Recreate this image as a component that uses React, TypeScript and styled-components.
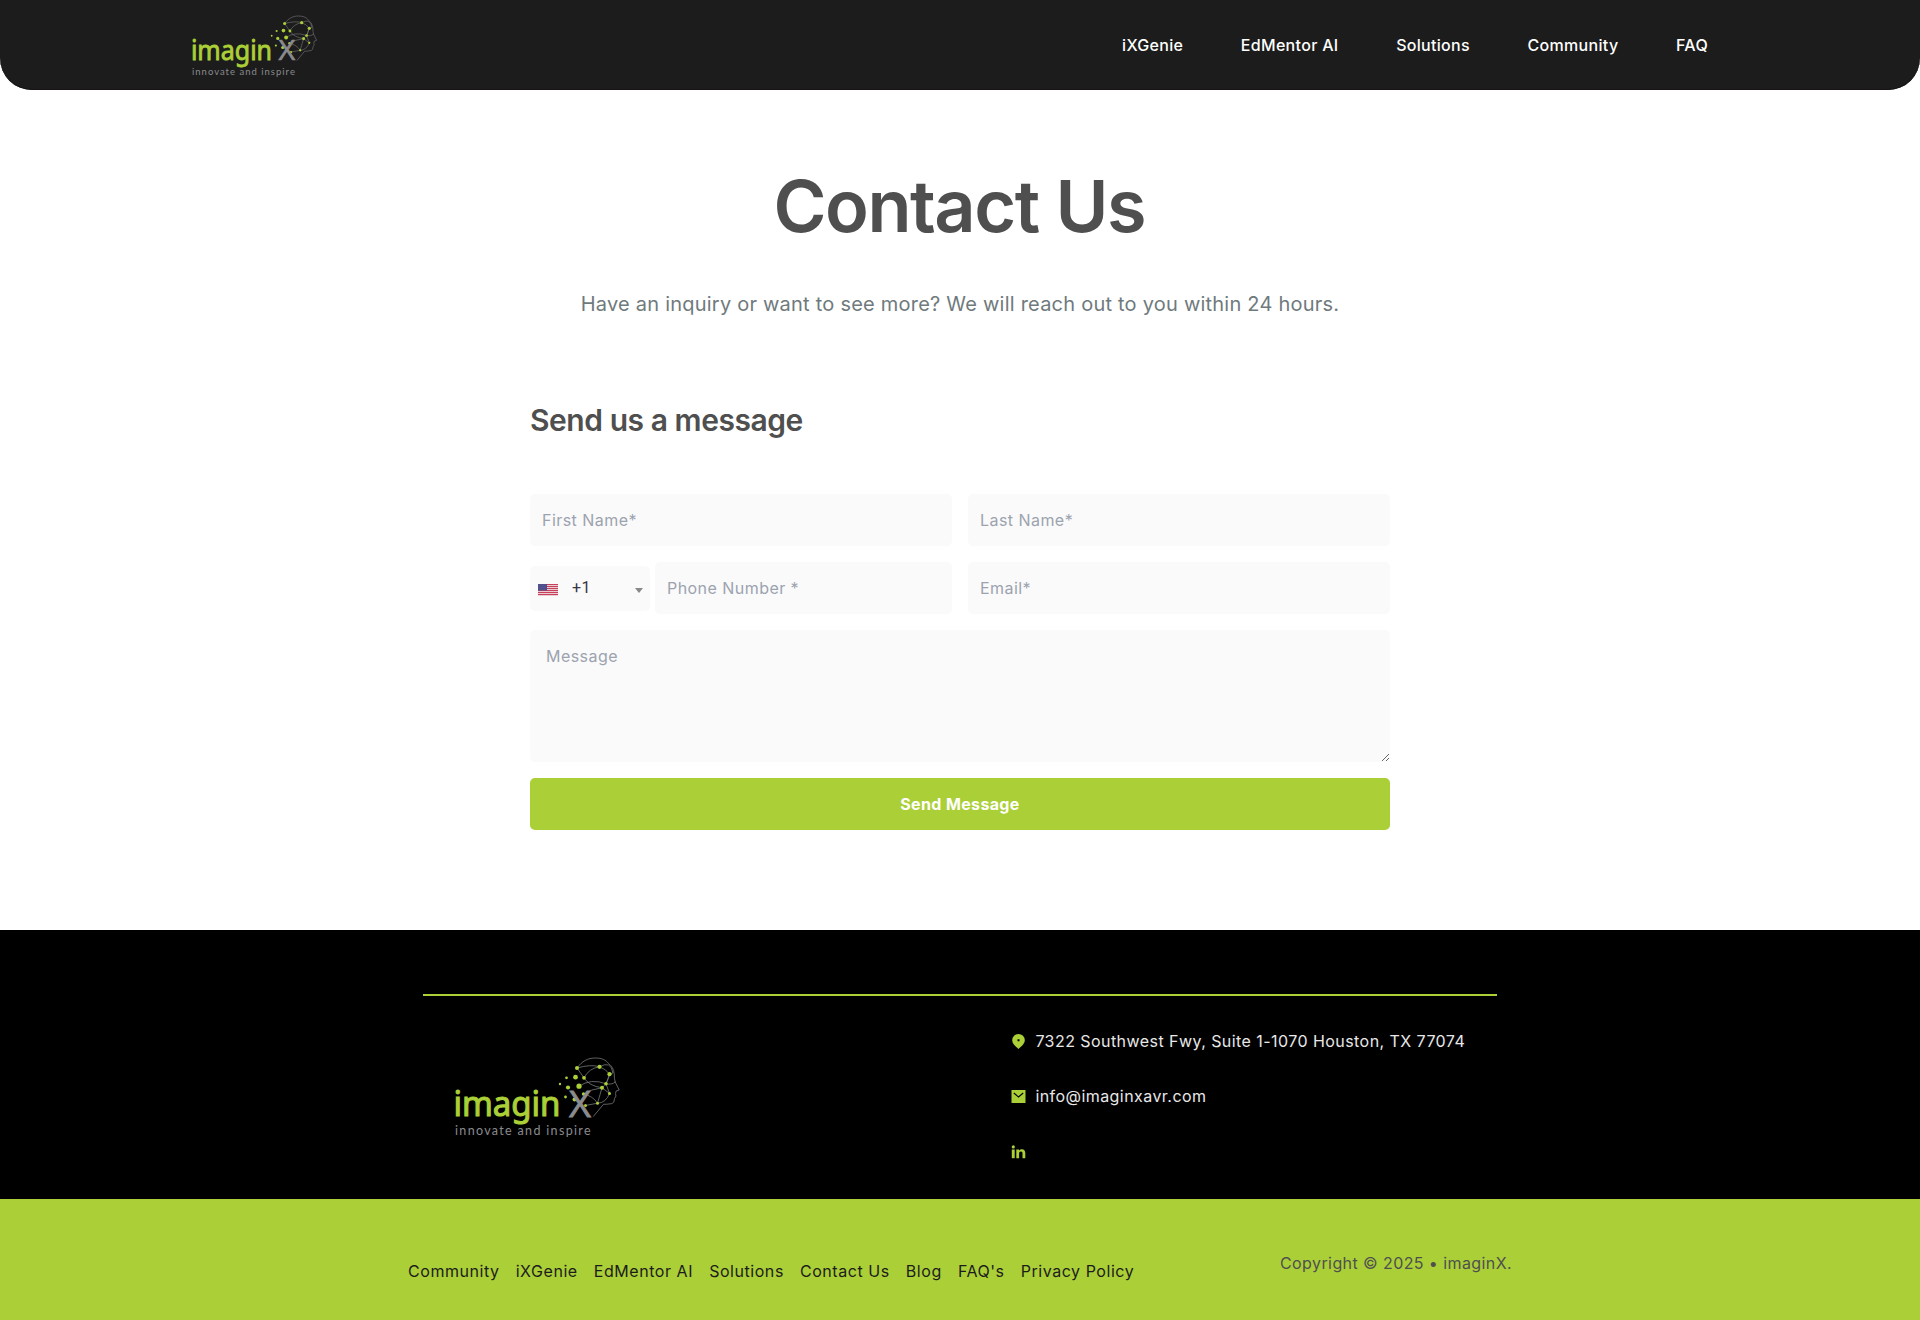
import React from 'react';
import styled, { createGlobalStyle } from 'styled-components';

const Global = createGlobalStyle`
  *, *::before, *::after { box-sizing: border-box; }
  body { margin: 0; background: #fff; font-family: Inter, "Liberation Sans", sans-serif; font-size: 16px; letter-spacing: 0.45px; color: #1c1c1c; }
  h1, h2, p { margin: 0; }
  a { color: inherit; text-decoration: none; }
`;

const Page = styled.div`
  display: flex;
  flex-direction: column;
  min-height: 1320px;
`;

const Header = styled.header`
  display: flex;
  justify-content: space-between;
  height: 90px;
  padding: 0 212px 0 192px;
  background: #1c1c1c;
  box-shadow: inset 0 -1px #171317;
  border-radius: 0 0 32px 32px;
`;

const HeaderLogo = styled.div`
  width: 126px;
  margin-top: 15.5px;
`;

const Nav = styled.nav`
  display: flex;
  align-items: center;
  gap: 57.6px;
  color: #fff;
  font-weight: 500;
  letter-spacing: 0.31px;
`;

const Main = styled.main`
  display: flex;
  flex-direction: column;
  align-items: center;
  height: 840px;
`;

const Title = styled.h1`
  margin-top: 72px;
  padding-right: 1.5px;
  font-size: 72px;
  line-height: 88px;
  font-weight: 600;
  letter-spacing: -1.45px;
  color: #4f4f4f;
`;

const Intro = styled.p`
  margin-top: 38px;
  font-size: 20px;
  line-height: 32px;
  letter-spacing: 0.225px;
  color: #6f7a7d;
`;

const Form = styled.form`
  display: grid;
  grid-template-columns: 1fr 1fr;
  gap: 16px;
  width: 860px;
  margin-top: 80px;
`;

const FormTitle = styled.h2`
  grid-column: 1 / -1;
  height: 78px;
  font-size: 30px;
  line-height: 40px;
  font-weight: 600;
  letter-spacing: -0.45px;
  color: #4f4f4f;
`;

const Field = styled.input`
  min-width: 0;
  width: 100%;
  height: 52px;
  padding: 0 12px;
  border: 0;
  border-radius: 5px;
  background: #fafafa;
  font: inherit;
  letter-spacing: inherit;
  &::placeholder { color: #9ca3af; opacity: 1; }
`;

const PhoneRow = styled.div`
  display: flex;
  align-items: center;
  gap: 5px;
`;

const CountrySelect = styled.button`
  display: flex;
  align-items: center;
  flex: 0 0 120px;
  height: 45px;
  margin-top: 1px;
  padding: 0 7px 0 8px;
  border: 0;
  border-radius: 5px;
  background: #fafafa;
  color: #3a3445;
  font: inherit;
  letter-spacing: 0.5px;
`;

const FlagIcon = styled.svg`
  width: 20px;
  height: 12px;
  margin-top: 2px;
`;

const DialCode = styled.span`
  flex: 1;
  padding: 0 0 2px 14px;
  text-align: left;
  font-family: Roboto, sans-serif;
`;

const Caret = styled.span`
  margin-top: 3px;
  border: 4px solid transparent;
  border-top: 5px solid #888;
  border-bottom: 0;
`;

const Message = styled.textarea`
  grid-column: 1 / -1;
  display: block;
  height: 132px;
  padding: 14px 16px;
  border: 0;
  border-radius: 5px;
  background: #fafafa;
  font: inherit;
  line-height: 24px;
  letter-spacing: inherit;
  resize: vertical;
  &::placeholder { color: #9ca3af; opacity: 1; }
`;

const Submit = styled.button`
  grid-column: 1 / -1;
  height: 52px;
  border: 0;
  border-radius: 5px;
  background: #abcf37;
  color: #fff;
  font: inherit;
  font-weight: 700;
  letter-spacing: 0.36px;
`;

const FooterTop = styled.section`
  display: flex;
  flex-direction: column;
  align-items: center;
  height: 269px;
  padding-top: 64px;
  background: #000;
`;

const Rule = styled.div`
  width: 1074px;
  height: 2px;
  background: #abcf37;
`;

const FooterBody = styled.div`
  display: flex;
  width: 1074px;
`;

const FooterLogo = styled.div`
  width: 166px;
  margin: 61.5px 0 0 32px;
`;

const Contacts = styled.div`
  display: flex;
  flex-direction: column;
  gap: 31.3px;
  margin: 33px 0 0 390.4px;
  color: #e8e8e8;
  letter-spacing: 0.44px;
  white-space: nowrap;
`;

const ContactRow = styled.div`
  display: flex;
  align-items: center;
  gap: 9px;
  height: 24px;
`;

const ContactIcon = styled.svg`
  width: 15px;
  height: 15px;
  color: #abcf37;
`;

const FooterBottom = styled.footer`
  display: flex;
  justify-content: space-between;
  height: 121px;
  padding: 0 408px;
  background: #abcf37;
`;

const FooterLinks = styled.nav`
  display: flex;
  gap: 16.1px;
  margin-top: 60px;
  line-height: 24px;
  letter-spacing: 0.55px;
`;

const Copyright = styled.p`
  margin-top: 52px;
  line-height: 24px;
  letter-spacing: 0.41px;
  color: #4f4f4f;
`;

const LogoSvg = styled.svg`
  display: block;
  width: 100%;
  overflow: visible;
`;

const dots: [number, number, number][] = [
  [122, 10, 2], [144.5, 8.8, 2.1], [154.5, 16.2, 2.1], [111.5, 19.8, 1.4], [120.5, 19.2, 2.4],
  [129, 19.8, 1.9], [105, 26, 1.2], [113, 29.5, 2.1], [124, 28.2, 2.6], [151, 25.8, 1.8],
  [147, 29.8, 2], [110.5, 39, 1.4], [119.5, 41.4, 2], [128.5, 36, 1.7], [154.5, 35.4, 1.5],
  [142.5, 45.2, 1.5], [130.5, 47.5, 1.5],
];

function Logo() {
  return (
    <LogoSvg viewBox="0 0 166 80" role="img" aria-label="imaginX innovate and inspire">
      <g fill="none" stroke="#77787b" strokeWidth="0.8" strokeLinecap="round" strokeLinejoin="round">
        <path d="M122 10C127 3 133 0 140.200 0C147 0 151 2 153.500 5.600Q158.500 9 159.200 15.600Q159.200 21 160.200 24L164.200 32L161.200 33L160.500 35.600L161 38L159.500 40.600Q159.500 45 156.900 45.600Q151 46.500 148.500 46.300L138.500 58.300" />
        <path d="M122 10Q136 6 144.500 8.800Q151 11 154.500 16.200L151 25.800L154.500 35.400L147 29.800L142.500 45.200L130.500 47.500" />
        <path d="M129 19.800Q134 10 144.500 8.800M122 10L129 19.800Q134 28 147 29.800Q153 25 154.500 16.200M124 28.200Q136 20 151 25.800Q157 27 160.200 24M128.500 36Q136 31 147 29.800M128.500 36Q138 38 142.500 45.200Q151 45 154.500 35.400M144.500 8.800Q156 2 158 15L154.500 16.200" />
      </g>
      <g fill="#abcf37">
        {dots.map(([x, y, r], i) => <circle key={i} cx={x} cy={y} r={r} />)}
      </g>
      <text x="-1.500" y="58.300" textLength="107" lengthAdjust="spacingAndGlyphs" fill="#abcf37" stroke="#abcf37" strokeWidth="1.1" fontFamily="'Noto Sans', sans-serif" fontSize="35" letterSpacing="0">imagin</text>
      <text x="114" y="58.500" textLength="22" lengthAdjust="spacingAndGlyphs" fill="#8a8b8e" stroke="#8a8b8e" strokeWidth="0.8" fontFamily="'Open Sans', sans-serif" fontSize="37" letterSpacing="0">X</text>
      <text x="0" y="77.200" textLength="136" fill="#8a8b8e" fontFamily="Lato, sans-serif" fontSize="12.500">innovate and inspire</text>
    </LogoSvg>
  );
}

function UsFlag() {
  return (
    <FlagIcon viewBox="0 0 20 12" aria-hidden="true">
      <rect width="20" height="12" fill="#f0e4e8" />
      {[0, 2, 4, 6, 8, 10].map((y) => <rect key={y} y={y} width="20" height="1.15" fill="#c8415a" />)}
      <rect width="9" height="6.500" fill="#4c4c8c" />
      <g fill="#9c9cc4">
        {[1, 3, 5].map((y) => [1, 3, 5, 7].map((x) => <circle key={`${x}-${y}`} cx={x} cy={y} r="0.35" />))}
      </g>
    </FlagIcon>
  );
}

const navItems = ['iXGenie', 'EdMentor AI', 'Solutions', 'Community', 'FAQ'];
const footerItems = ['Community', 'iXGenie', 'EdMentor AI', 'Solutions', 'Contact Us', 'Blog', "FAQ's", 'Privacy Policy'];

export default function App() {
  return (
    <Page>
      <Global />
      <Header>
        <HeaderLogo><Logo /></HeaderLogo>
        <Nav>{navItems.map((item) => <a key={item} href="#">{item}</a>)}</Nav>
      </Header>
      <Main>
        <Title>Contact Us</Title>
        <Intro>Have an inquiry or want to see more? We will reach out to you within 24 hours.</Intro>
        <Form>
          <FormTitle>Send us a message</FormTitle>
          <Field placeholder="First Name*" />
          <Field placeholder="Last Name*" />
          <PhoneRow>
            <CountrySelect type="button">
              <UsFlag />
              <DialCode>+1</DialCode>
              <Caret />
            </CountrySelect>
            <Field placeholder="Phone Number *" />
          </PhoneRow>
          <Field placeholder="Email*" />
          <Message placeholder="Message" />
          <Submit type="button">Send Message</Submit>
        </Form>
      </Main>
      <FooterTop>
        <Rule />
        <FooterBody>
          <FooterLogo><Logo /></FooterLogo>
          <Contacts>
            <ContactRow>
              <ContactIcon viewBox="0 0 15 15">
                <path fill="currentColor" fillRule="evenodd" d="M7.500 0A6.300 6.300 0 0 0 1.200 6.300C1.200 9.500 4 12 7.500 15C11 12 13.800 9.500 13.800 6.300A6.300 6.300 0 0 0 7.500 0ZM6.500 5.200H8.500V7.200H6.500Z" />
              </ContactIcon>
              <span>7322 Southwest Fwy, Suite 1-1070 Houston, TX 77074</span>
            </ContactRow>
            <ContactRow>
              <ContactIcon viewBox="0 0 15 15">
                <path fill="currentColor" d="M.5 1H14.500V14H.5Z" />
                <path fill="none" stroke="#000" strokeWidth="1.100" d="M2.800 4L7.500 8L12.200 4" />
              </ContactIcon>
              <span>info@imaginxavr.com</span>
            </ContactRow>
            <ContactRow>
              <ContactIcon viewBox="0 0 15 15">
                <g fill="currentColor">
                  <rect x="0.800" y="5.500" width="2.900" height="8.700" />
                  <circle cx="2.300" cy="2.900" r="1.600" />
                  <path d="M5.300 5.500H8V6.700C8.600 5.700 9.500 5.200 10.800 5.200C13.500 5.200 14.300 6.900 14.300 9.300V14.200H11.500V9.800C11.500 8.500 11.200 7.600 9.900 7.600C8.600 7.600 8.100 8.500 8.100 9.800V14.200H5.300Z" />
                </g>
              </ContactIcon>
            </ContactRow>
          </Contacts>
        </FooterBody>
      </FooterTop>
      <FooterBottom>
        <FooterLinks>{footerItems.map((item) => <a key={item} href="#">{item}</a>)}</FooterLinks>
        <Copyright>Copyright © 2025 • imaginX.</Copyright>
      </FooterBottom>
    </Page>
  );
}
